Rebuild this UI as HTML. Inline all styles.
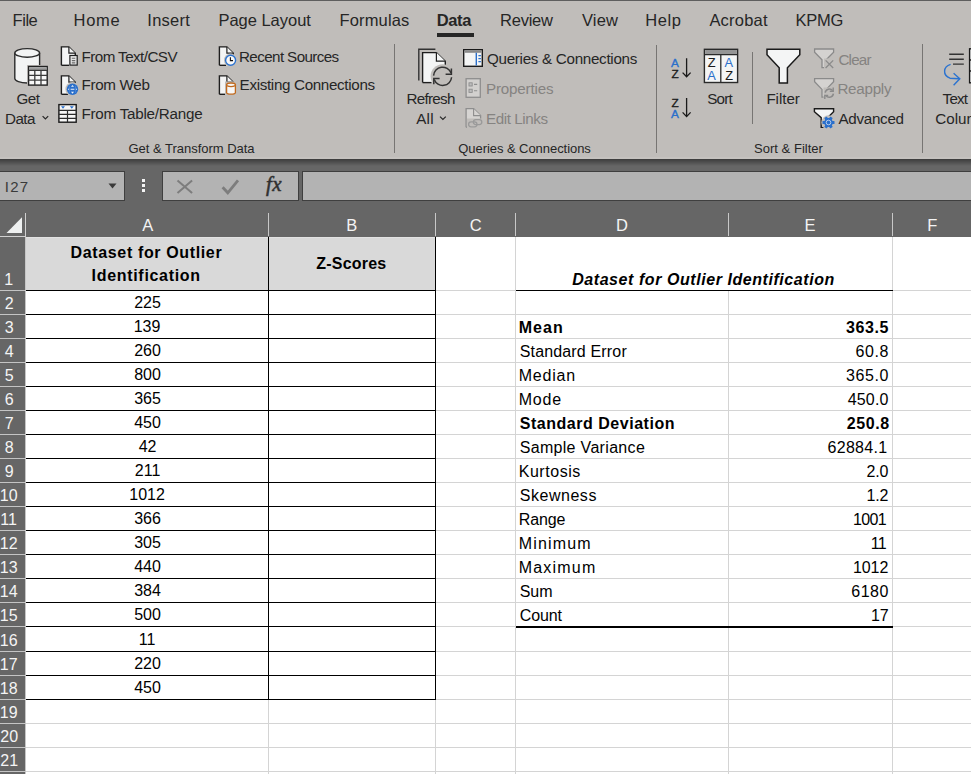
<!DOCTYPE html>
<html><head><meta charset="utf-8"><style>
html,body{margin:0;padding:0}
body{width:971px;height:774px;overflow:hidden;position:relative;background:#666666;font-family:"Liberation Sans",sans-serif}
.t{position:absolute;white-space:nowrap;line-height:1;font-family:"Liberation Sans",sans-serif}
.a{position:absolute}
svg{position:absolute;overflow:visible}
</style></head><body>

<div class="a" style="left:0;top:0;width:971px;height:159px;background:#c0bdba"></div>
<div class="a" style="left:0;top:157px;width:971px;height:2px;background:#c5c2bf"></div>
<div class="a" style="left:0;top:0;width:971px;height:1px;background:#5e5e5e"></div>
<div class="a" style="left:437px;top:33px;width:37px;height:4px;background:#262626"></div>
<div class="a" style="left:394px;top:44px;width:1px;height:109px;background:#777573"></div>
<div class="a" style="left:656px;top:45px;width:1px;height:108px;background:#777573"></div>
<div class="a" style="left:752px;top:52px;width:1px;height:72px;background:#777573"></div>
<div class="a" style="left:922px;top:44px;width:1px;height:109px;background:#777573"></div>
<div class="a" style="left:0;top:159px;width:971px;height:7px;background:linear-gradient(#3c3c3c,#666666)"></div>
<div class="a" style="left:-1px;top:171px;width:124px;height:28px;background:#b3b3b3;border:1px solid #3f3f3f"></div>
<svg style="left:0;top:0" width="971" height="774"><path d="M108.5 183.5h8l-4 5z" fill="#3a3a3a"/></svg>
<div class="a" style="left:142px;top:179px;width:3px;height:3px;background:#f4f4f4"></div>
<div class="a" style="left:142px;top:184px;width:3px;height:3px;background:#f4f4f4"></div>
<div class="a" style="left:142px;top:189px;width:3px;height:3px;background:#f4f4f4"></div>
<div class="a" style="left:162px;top:171px;width:135px;height:28px;background:#b3b3b3;border:1px solid #3f3f3f"></div>
<div class="a" style="left:302px;top:171px;width:680px;height:28px;background:#b3b3b3;border:1px solid #3f3f3f"></div>
<svg style="left:0;top:0" width="971" height="774">
<path d="M177.5 180.5l14.6 12.6M192.1 180.5l-14.6 12.6" stroke="#7d7d7d" stroke-width="2" fill="none"/>
<path d="M222.6 187.2l5.2 5.6l10.2-12.4" stroke="#7d7d7d" stroke-width="2.8" fill="none"/>
</svg>
<span class="t" style="left:266px;top:174px;font-family:'Liberation Serif',serif;font-style:italic;font-size:21px;color:#303030;-webkit-text-stroke:0.5px #303030;letter-spacing:0.5px;">fx</span>
<div class="a" style="left:26px;top:237px;width:945px;height:537px;background:#ffffff"></div>
<div class="a" style="left:268px;top:213px;width:1px;height:23px;background:#c8c8c8"></div>
<div class="a" style="left:435px;top:213px;width:1px;height:23px;background:#c8c8c8"></div>
<div class="a" style="left:515px;top:213px;width:1px;height:23px;background:#c8c8c8"></div>
<div class="a" style="left:728px;top:213px;width:1px;height:23px;background:#c8c8c8"></div>
<div class="a" style="left:892px;top:213px;width:1px;height:23px;background:#c8c8c8"></div>
<div class="a" style="left:25px;top:213px;width:1px;height:24px;background:#d0d0d0"></div>
<div class="a" style="left:0;top:236px;width:26px;height:1px;background:#d0d0d0"></div>
<svg style="left:0;top:0" width="971" height="774"><path d="M6.5 233L22 233L22 217.3Z" fill="#eef0f0"/></svg>
<div class="a" style="left:25px;top:237px;width:1px;height:537px;background:#c6c6c6"></div>
<svg style="left:0;top:0" width="971" height="774" shape-rendering="crispEdges">
<rect x="268" y="237" width="1" height="537" fill="#d4d4d4"/>
<rect x="435" y="237" width="1" height="537" fill="#d4d4d4"/>
<rect x="515" y="237" width="1" height="537" fill="#d4d4d4"/>
<rect x="728" y="237" width="1" height="537" fill="#d4d4d4"/>
<rect x="892" y="237" width="1" height="537" fill="#d4d4d4"/>
<rect x="26" y="290" width="945" height="1" fill="#d4d4d4"/>
<rect x="0" y="290" width="25" height="1" fill="#c4c4c4"/>
<rect x="26" y="314" width="945" height="1" fill="#d4d4d4"/>
<rect x="0" y="314" width="25" height="1" fill="#c4c4c4"/>
<rect x="26" y="338" width="945" height="1" fill="#d4d4d4"/>
<rect x="0" y="338" width="25" height="1" fill="#c4c4c4"/>
<rect x="26" y="362" width="945" height="1" fill="#d4d4d4"/>
<rect x="0" y="362" width="25" height="1" fill="#c4c4c4"/>
<rect x="26" y="386" width="945" height="1" fill="#d4d4d4"/>
<rect x="0" y="386" width="25" height="1" fill="#c4c4c4"/>
<rect x="26" y="410" width="945" height="1" fill="#d4d4d4"/>
<rect x="0" y="410" width="25" height="1" fill="#c4c4c4"/>
<rect x="26" y="434" width="945" height="1" fill="#d4d4d4"/>
<rect x="0" y="434" width="25" height="1" fill="#c4c4c4"/>
<rect x="26" y="458" width="945" height="1" fill="#d4d4d4"/>
<rect x="0" y="458" width="25" height="1" fill="#c4c4c4"/>
<rect x="26" y="482" width="945" height="1" fill="#d4d4d4"/>
<rect x="0" y="482" width="25" height="1" fill="#c4c4c4"/>
<rect x="26" y="506" width="945" height="1" fill="#d4d4d4"/>
<rect x="0" y="506" width="25" height="1" fill="#c4c4c4"/>
<rect x="26" y="530" width="945" height="1" fill="#d4d4d4"/>
<rect x="0" y="530" width="25" height="1" fill="#c4c4c4"/>
<rect x="26" y="554" width="945" height="1" fill="#d4d4d4"/>
<rect x="0" y="554" width="25" height="1" fill="#c4c4c4"/>
<rect x="26" y="578" width="945" height="1" fill="#d4d4d4"/>
<rect x="0" y="578" width="25" height="1" fill="#c4c4c4"/>
<rect x="26" y="602" width="945" height="1" fill="#d4d4d4"/>
<rect x="0" y="602" width="25" height="1" fill="#c4c4c4"/>
<rect x="26" y="626" width="945" height="1" fill="#d4d4d4"/>
<rect x="0" y="626" width="25" height="1" fill="#c4c4c4"/>
<rect x="26" y="651" width="945" height="1" fill="#d4d4d4"/>
<rect x="0" y="651" width="25" height="1" fill="#c4c4c4"/>
<rect x="26" y="675" width="945" height="1" fill="#d4d4d4"/>
<rect x="0" y="675" width="25" height="1" fill="#c4c4c4"/>
<rect x="26" y="699" width="945" height="1" fill="#d4d4d4"/>
<rect x="0" y="699" width="25" height="1" fill="#c4c4c4"/>
<rect x="26" y="723" width="945" height="1" fill="#d4d4d4"/>
<rect x="0" y="723" width="25" height="1" fill="#c4c4c4"/>
<rect x="26" y="747" width="945" height="1" fill="#d4d4d4"/>
<rect x="0" y="747" width="25" height="1" fill="#c4c4c4"/>
<rect x="26" y="771" width="945" height="1" fill="#d4d4d4"/>
<rect x="0" y="771" width="25" height="1" fill="#c4c4c4"/>
<rect x="26" y="795" width="945" height="1" fill="#d4d4d4"/>
<rect x="0" y="795" width="25" height="1" fill="#c4c4c4"/>
</svg>
<div class="a" style="left:26px;top:237px;width:409px;height:53px;background:#d9d9d9"></div>
<div class="a" style="left:26px;top:237px;width:409px;height:1px;background:#e2e2e2"></div>
<div class="a" style="left:516px;top:237px;width:376px;height:53px;background:#ffffff"></div>
<svg style="left:0;top:0" width="971" height="774" shape-rendering="crispEdges">
<rect x="268" y="237" width="1" height="463" fill="#000"/>
<rect x="435" y="237" width="1" height="463" fill="#000"/>
<rect x="26" y="290" width="410" height="1" fill="#000"/>
<rect x="26" y="314" width="410" height="1" fill="#000"/>
<rect x="26" y="338" width="410" height="1" fill="#000"/>
<rect x="26" y="362" width="410" height="1" fill="#000"/>
<rect x="26" y="386" width="410" height="1" fill="#000"/>
<rect x="26" y="410" width="410" height="1" fill="#000"/>
<rect x="26" y="434" width="410" height="1" fill="#000"/>
<rect x="26" y="458" width="410" height="1" fill="#000"/>
<rect x="26" y="482" width="410" height="1" fill="#000"/>
<rect x="26" y="506" width="410" height="1" fill="#000"/>
<rect x="26" y="530" width="410" height="1" fill="#000"/>
<rect x="26" y="554" width="410" height="1" fill="#000"/>
<rect x="26" y="578" width="410" height="1" fill="#000"/>
<rect x="26" y="602" width="410" height="1" fill="#000"/>
<rect x="26" y="626" width="410" height="1" fill="#000"/>
<rect x="26" y="651" width="410" height="1" fill="#000"/>
<rect x="26" y="675" width="410" height="1" fill="#000"/>
<rect x="26" y="699" width="410" height="1" fill="#000"/>
<rect x="516" y="290" width="377" height="1" fill="#000"/>
<rect x="516" y="626" width="377" height="2" fill="#000"/>
</svg>
<svg style="left:0;top:0" width="971" height="774">
<g stroke-linejoin="miter">
<!-- Get Data cylinder -->
<path d="M14.8 52.9 V78.6 A12.4 4.4 0 0 0 39.6 78.6 V52.9" fill="#f3f4f4" stroke="#2b2b2b" stroke-width="1.4"/>
<ellipse cx="27.2" cy="52.9" rx="12.4" ry="4.3" fill="#f3f4f4" stroke="#2b2b2b" stroke-width="1.4"/>
<!-- table -->
<rect x="27" y="65" width="21.6" height="21.6" fill="#c0bdba"/>
<rect x="28.6" y="66.5" width="18.6" height="18.6" fill="#f8f8f8" stroke="#222" stroke-width="1.4"/>
<rect x="29.3" y="67.2" width="17.2" height="3" fill="#9c9c9c"/>
<path d="M28.6 70.4H47.2M28.6 75.3H47.2M28.6 80.2H47.2M34.8 70.4V85.1M41 70.4V85.1" stroke="#3a3a3a" stroke-width="1.3" fill="none"/>
<!-- chevron Get Data -->
<path d="M42.6 116.2L45.4 119L48.2 116.2" stroke="#262626" stroke-width="1.2" fill="none"/>

<!-- doc icon generic: From Text/CSV -->
<g transform="translate(0,0)">
<path d="M61.4 65.3V46.9H68.9L75.3 53.2V65.3Z" fill="#f4f5f5" stroke="none"/>
<path d="M61.4 65.3V46.9H68.9L75.3 53.2V56" fill="none" stroke="#1e1e1e" stroke-width="1.4"/>
<path d="M68.9 46.9V53.2H75.3" fill="#f4f5f5" stroke="#1e1e1e" stroke-width="1.2"/>
<path d="M61.4 65.3H69" stroke="#1e1e1e" stroke-width="1.4"/>
<rect x="69.9" y="55.5" width="7.3" height="9.6" fill="#e8e8e8" stroke="#1e1e1e" stroke-width="1.2"/>
<path d="M71.8 58.3H75.3M71.8 60.6H75.3M71.8 62.9H75.3" stroke="#6a6a6a" stroke-width="1.1"/>
</g>
<!-- From Web doc -->
<g>
<path d="M61.4 94.3V75.9H68.9L75.3 82.2V94.3Z" fill="#f4f5f5" stroke="none"/>
<path d="M61.4 94.3V75.9H68.9L75.3 82.2V84" fill="none" stroke="#1e1e1e" stroke-width="1.4"/>
<path d="M68.9 75.9V82.2H75.3" fill="#f4f5f5" stroke="#1e1e1e" stroke-width="1.2"/>
<path d="M61.4 94.3H68" stroke="#1e1e1e" stroke-width="1.4"/>
<circle cx="72.4" cy="89.1" r="7" fill="#c0bdba"/>
<circle cx="72.5" cy="89.3" r="5.7" fill="#2a6fcb"/>
<path d="M68 89.3H69M70.6 89.3H74.4M76 89.3H77" stroke="#f0f4fa" stroke-width="1.1"/>
<path d="M71 86.8L72.5 84.9L74 86.8Z M71 91.8L72.5 93.7L74 91.8Z" fill="#f0f4fa"/>
<path d="M69.4 85.8V92.8M75.6 85.8V92.8" stroke="#5a90d8" stroke-width="0.7"/>
</g>
<!-- From Table/Range -->
<g>
<rect x="58.9" y="104.6" width="17.3" height="17.6" fill="#f6f6f6" stroke="#1a1a1a" stroke-width="1.4"/>
<path d="M58.9 110.3H76.2M58.9 114.4H76.2M58.9 118.3H76.2M67.5 110.3V122.2" stroke="#2a2a2a" stroke-width="1.2"/>
<path d="M61 106.2H65L63 108.8Z M69.8 106.2H73.8L71.8 108.8Z" fill="#2a6fcb"/>
</g>
<!-- Recent Sources doc + clock -->
<g>
<path d="M219.4 65.3V46.9H226.9L233.3 53.2V65.3Z" fill="#f4f5f5" stroke="none"/>
<path d="M219.4 65.3V46.9H226.9L233.3 53.2V56" fill="none" stroke="#1e1e1e" stroke-width="1.4"/>
<path d="M226.9 46.9V53.2H233.3" fill="#f4f5f5" stroke="#1e1e1e" stroke-width="1.2"/>
<path d="M219.4 65.3H226" stroke="#1e1e1e" stroke-width="1.4"/>
<circle cx="230.6" cy="60.2" r="6.6" fill="#c0bdba"/>
<circle cx="230.6" cy="60.2" r="5" fill="#f8f8f8" stroke="#2b73d0" stroke-width="1.4"/>
<path d="M230.4 57.2V60.6H233" stroke="#111" stroke-width="1.1" fill="none"/>
</g>
<!-- Existing Connections doc + cylinder -->
<g>
<path d="M219.4 94.3V75.9H226.9L233.3 82.2V94.3Z" fill="#f4f5f5" stroke="none"/>
<path d="M219.4 94.3V75.9H226.9L233.3 82.2V84" fill="none" stroke="#1e1e1e" stroke-width="1.4"/>
<path d="M226.9 75.9V82.2H233.3" fill="#f4f5f5" stroke="#1e1e1e" stroke-width="1.2"/>
<path d="M219.4 94.3H226" stroke="#1e1e1e" stroke-width="1.4"/>
<rect x="225" y="81.5" width="12" height="14.5" fill="#c0bdba"/>
<path d="M226.6 84.8V92.4A4.4 1.8 0 0 0 235.4 92.4V84.8" fill="#f6f6f6" stroke="#c0691d" stroke-width="1.3"/>
<ellipse cx="231" cy="84.8" rx="4.4" ry="1.8" fill="#f6f6f6" stroke="#c0691d" stroke-width="1.3"/>
</g>

<!-- Refresh All -->
<g>
<path d="M418.8 80.4V49.2H435.4" stroke="#333" stroke-width="1.4" fill="none"/>
<path d="M422.6 82.6V52.6H436.4L445.3 61.2V82.6Z" fill="#f4f5f5" stroke="none"/>
<path d="M422.6 82.6V52.6H436.4L445.3 61.2V66" fill="none" stroke="#1e1e1e" stroke-width="1.4"/>
<path d="M436.4 52.6V61.2H445.3" fill="#f4f5f5" stroke="#1e1e1e" stroke-width="1.2"/>
<path d="M422.6 82.6H431.5" stroke="#1e1e1e" stroke-width="1.4"/>
<circle cx="442.6" cy="76.2" r="12" fill="#c0bdba"/>
<path d="M433.6 75.6A9 9 0 0 1 451 73" stroke="#333" stroke-width="1.5" fill="none"/>
<path d="M451.4 68.5V74.3H445.6" stroke="#333" stroke-width="1.5" fill="none"/>
<path d="M451.6 77.2A9 9 0 0 1 434.2 79.6" stroke="#333" stroke-width="1.5" fill="none"/>
<path d="M433.8 84.3V78.5H439.6" stroke="#333" stroke-width="1.5" fill="none"/>
</g>
<path d="M440 116.6L442.9 119.4L445.8 116.6" stroke="#262626" stroke-width="1.2" fill="none"/>

<!-- Queries & Connections icon -->
<g>
<rect x="463.7" y="49.7" width="18.6" height="16.6" fill="#f4f5f5" stroke="#1a1a1a" stroke-width="1.4"/>
<rect x="464.4" y="50.4" width="17.2" height="2.4" fill="#8a8a8a"/>
<path d="M476.3 52.8V65.6" stroke="#2b6fcb" stroke-width="1.4"/>
<path d="M478.4 55.6H480.9M478.4 58.6H480.9M478.4 61.6H480.9" stroke="#2b6fcb" stroke-width="1.3"/>
</g>
<!-- Properties (disabled) -->
<g>
<rect x="466.1" y="78.7" width="14.2" height="18.6" fill="#d2d0ce" stroke="#8e8e8e" stroke-width="1.3"/>
<rect x="469" y="82.8" width="3.2" height="3.2" fill="#bcbcbc" stroke="#8e8e8e" stroke-width="0.9"/>
<rect x="469" y="89.2" width="3.2" height="3.2" fill="#bcbcbc" stroke="#8e8e8e" stroke-width="0.9"/>
<path d="M474 84.4H477.2M474 90.8H477.2" stroke="#8e8e8e" stroke-width="1.1"/>
</g>
<!-- Edit Links (disabled) -->
<g>
<path d="M466.1 127.2V108.7H473.6L480.6 115.6V120" fill="#d6d4d2" stroke="#8e8e8e" stroke-width="1.3"/>
<path d="M473.6 108.7V115.6H480.6" fill="#d6d4d2" stroke="#8e8e8e" stroke-width="1.1"/>
<path d="M466.1 127.2H470" stroke="#8e8e8e" stroke-width="1.3"/>
<rect x="467" y="118.5" width="16" height="10" fill="#c0bdba"/>
<rect x="468.6" y="121.8" width="8.4" height="5" rx="2.5" fill="none" stroke="#9a9a9a" stroke-width="1.3"/>
<rect x="473.4" y="119.6" width="8.4" height="5" rx="2.5" fill="none" stroke="#9a9a9a" stroke-width="1.3"/>
</g>

<!-- Sort AZ -->
<g font-family="Liberation Sans" font-size="11.8" stroke-width="0.35">
<text x="671" y="66.8" fill="#2a6fcb" stroke="#2a6fcb">A</text>
<text x="671.4" y="77.8" fill="#1a1a1a" stroke="#1a1a1a">Z</text>
<text x="671.4" y="106.6" fill="#1a1a1a" stroke="#1a1a1a">Z</text>
<text x="671" y="117.7" fill="#2a6fcb" stroke="#2a6fcb">A</text>
</g>
<path d="M686.6 58.3V76.6M682.6 72.6L686.6 76.8L690.6 72.6" stroke="#1a1a1a" stroke-width="1.3" fill="none"/>
<path d="M686.6 98V116.4M682.6 112.4L686.6 116.6L690.6 112.4" stroke="#1a1a1a" stroke-width="1.3" fill="none"/>
<!-- Sort big -->
<g>
<rect x="704.4" y="49.3" width="33.2" height="33.2" fill="#f4f5f5" stroke="#2a2a2a" stroke-width="1.4"/>
<rect x="705.1" y="50" width="31.8" height="4.4" fill="#959595"/>
<path d="M704.4 54.6H737.6M720.8 54.6V82.5" stroke="#2a2a2a" stroke-width="1.3"/>
<g font-family="Liberation Sans" font-size="12.8" stroke-width="0.05">
<text x="707.8" y="66.6" fill="#1a1a1a" stroke="#1a1a1a">Z</text>
<text x="707.2" y="79.6" fill="#2a6fcb" stroke="#2a6fcb">A</text>
<text x="724.6" y="66.6" fill="#2a6fcb" stroke="#2a6fcb">A</text>
<text x="725.2" y="79.6" fill="#1a1a1a" stroke="#1a1a1a">Z</text>
</g>
</g>
<!-- Filter big -->
<path d="M767 49.2H799.8V54.8L787.4 67.8V83H779.2V67.8L767 54.8Z" fill="#f4f5f5" stroke="#1a1a1a" stroke-width="1.5"/>
<!-- Clear (disabled) -->
<g>
<path d="M814.6 49H833.6V52.2L826.2 59.8V67.6H822V59.8L814.6 52.2Z" fill="#d4d2d0" stroke="#8a8a8a" stroke-width="1.3"/>
<rect x="824" y="58.5" width="11" height="11" fill="#c0bdba"/>
<path d="M825.6 60.4L833.2 68M833.2 60.4L825.6 68" stroke="#8a8a8a" stroke-width="1.3"/>
</g>
<!-- Reapply (disabled) -->
<g>
<path d="M814.6 78.6H833.6V81.8L826.2 89.4V97.2H822V89.4L814.6 81.8Z" fill="#d4d2d0" stroke="#8a8a8a" stroke-width="1.3"/>
<rect x="823.5" y="87.5" width="11.5" height="11" fill="#c0bdba"/>
<path d="M825.2 92.6A4.2 4.2 0 0 1 832.6 90.6M833.4 93.6A4.2 4.2 0 0 1 826 95.8" stroke="#8a8a8a" stroke-width="1.5" fill="none"/>
<path d="M833.2 87.6V91.2H829.8M824.8 99V95.4H828.2" stroke="#8a8a8a" stroke-width="1.4" fill="none"/>
</g>
<!-- Advanced -->
<g>
<path d="M814.4 108.7H833.6V111.7L828 117.2V127.4H821.2V117.6L814.4 111.7Z" fill="#f4f5f5" stroke="#1a1a1a" stroke-width="1.4"/>
<circle cx="828.5" cy="122.5" r="7.2" fill="#c0bdba"/>
<g transform="translate(828.5 122.5)" fill="#2a6fcb">
<circle r="4.4"/>
<rect x="-6" y="-1.5" width="12" height="3" rx="0.6"/>
<rect x="-6" y="-1.5" width="12" height="3" rx="0.6" transform="rotate(60)"/>
<rect x="-6" y="-1.5" width="12" height="3" rx="0.6" transform="rotate(120)"/>
<circle r="2.3" fill="none" stroke="#cfe0f5" stroke-width="0.8"/>
</g>
</g>
<!-- Text to Columns (partial) -->
<g>
<path d="M949.2 54.3H963.8M949.2 59.2H963.8M953 64.1H963.8" stroke="#333" stroke-width="1.4"/>
<rect x="969.6" y="48.8" width="10" height="34" fill="#f4f5f5" stroke="#1a1a1a" stroke-width="1.4"/>
<path d="M969.6 60H980M969.6 71H980" stroke="#1a1a1a" stroke-width="1.3"/>
<path d="M950.6 64.4C943 66.6 942.4 75.4 950 78.2L959 78.8" stroke="#2b73d0" stroke-width="1.4" fill="none"/>
<path d="M953.6 73.2L959.8 78.8L953.6 85.2" stroke="#2b73d0" stroke-width="1.4" fill="none"/>
</g>
</g>
</svg>

<span class="t" style="left:12.60px;top:12.00px;font-size:16.5px;color:#262626;letter-spacing:-0.470px;">File</span>
<span class="t" style="left:73.60px;top:12.00px;font-size:16.5px;color:#262626;letter-spacing:0.654px;">Home</span>
<span class="t" style="left:147.30px;top:12.00px;font-size:16.5px;color:#262626;letter-spacing:0.264px;">Insert</span>
<span class="t" style="left:218.40px;top:12.00px;font-size:16.5px;color:#262626;letter-spacing:-0.018px;">Page Layout</span>
<span class="t" style="left:339.50px;top:12.00px;font-size:16.5px;color:#262626;letter-spacing:0.141px;">Formulas</span>
<span class="t" style="left:436.70px;top:12.00px;font-size:16.5px;color:#262626;font-weight:bold;letter-spacing:-0.329px;">Data</span>
<span class="t" style="left:500.10px;top:12.00px;font-size:16.5px;color:#262626;letter-spacing:-0.257px;">Review</span>
<span class="t" style="left:582.00px;top:12.00px;font-size:16.5px;color:#262626;letter-spacing:0.150px;">View</span>
<span class="t" style="left:645.20px;top:12.00px;font-size:16.5px;color:#262626;letter-spacing:0.614px;">Help</span>
<span class="t" style="left:709.40px;top:12.00px;font-size:16.5px;color:#262626;letter-spacing:0.220px;">Acrobat</span>
<span class="t" style="left:795.40px;top:12.00px;font-size:16.5px;color:#262626;letter-spacing:-0.185px;">KPMG</span>
<span class="t" style="left:16.60px;top:91.00px;font-size:15.2px;color:#262626;letter-spacing:-0.600px;">Get</span>
<span class="t" style="left:5.00px;top:111.00px;font-size:15.2px;color:#262626;letter-spacing:-0.545px;">Data</span>
<span class="t" style="left:81.50px;top:49.00px;font-size:15.2px;color:#262626;letter-spacing:-0.552px;">From Text/CSV</span>
<span class="t" style="left:81.50px;top:77.00px;font-size:15.2px;color:#262626;letter-spacing:-0.308px;">From Web</span>
<span class="t" style="left:81.50px;top:106.00px;font-size:15.2px;color:#262626;letter-spacing:-0.239px;">From Table/Range</span>
<span class="t" style="left:239.00px;top:49.00px;font-size:15.2px;color:#262626;letter-spacing:-0.605px;">Recent Sources</span>
<span class="t" style="left:239.60px;top:77.00px;font-size:15.2px;color:#262626;letter-spacing:-0.333px;">Existing Connections</span>
<span class="t" style="left:406.40px;top:91.00px;font-size:15.2px;color:#262626;letter-spacing:-0.689px;">Refresh</span>
<span class="t" style="left:416.20px;top:111.00px;font-size:15.2px;color:#262626;letter-spacing:0.248px;">All</span>
<span class="t" style="left:487.00px;top:51.00px;font-size:15.2px;color:#262626;letter-spacing:-0.294px;">Queries &amp; Connections</span>
<span class="t" style="left:486.00px;top:81.00px;font-size:15.2px;color:#858381;letter-spacing:-0.192px;">Properties</span>
<span class="t" style="left:486.00px;top:111.00px;font-size:15.2px;color:#858381;letter-spacing:-0.417px;">Edit Links</span>
<span class="t" style="left:707.20px;top:91.00px;font-size:15.2px;color:#262626;letter-spacing:-0.745px;">Sort</span>
<span class="t" style="left:766.40px;top:91.00px;font-size:15.2px;color:#262626;letter-spacing:-0.058px;">Filter</span>
<span class="t" style="left:838.40px;top:52.00px;font-size:15.2px;color:#858381;letter-spacing:-0.784px;">Clear</span>
<span class="t" style="left:837.40px;top:81.00px;font-size:15.2px;color:#858381;letter-spacing:-0.255px;">Reapply</span>
<span class="t" style="left:838.40px;top:111.00px;font-size:15.2px;color:#262626;letter-spacing:-0.272px;">Advanced</span>
<span class="t" style="left:942.60px;top:91.00px;font-size:15.2px;color:#262626;letter-spacing:-0.800px;">Text</span>
<span class="t" style="left:935.30px;top:111.00px;font-size:15.2px;color:#262626;">Columns</span>
<span class="t" style="left:128.50px;top:142.00px;font-size:13px;color:#262626;letter-spacing:-0.018px;">Get &amp; Transform Data</span>
<span class="t" style="left:458.30px;top:142.00px;font-size:13px;color:#262626;letter-spacing:-0.059px;">Queries &amp; Connections</span>
<span class="t" style="left:754.00px;top:142.00px;font-size:13px;color:#262626;letter-spacing:0.025px;">Sort &amp; Filter</span>
<span class="t" style="left:4.80px;top:179.00px;font-size:15px;color:#3a3a3a;letter-spacing:1.200px;">I27</span>
<span class="t" style="left:142.20px;top:217.00px;font-size:16.5px;color:#f4f4f4;">A</span>
<span class="t" style="left:346.30px;top:217.00px;font-size:16.5px;color:#f4f4f4;">B</span>
<span class="t" style="left:469.70px;top:217.00px;font-size:16.5px;color:#f4f4f4;">C</span>
<span class="t" style="left:615.90px;top:217.00px;font-size:16.5px;color:#f4f4f4;">D</span>
<span class="t" style="left:804.50px;top:217.00px;font-size:16.5px;color:#f4f4f4;">E</span>
<span class="t" style="left:927.30px;top:217.00px;font-size:16.5px;color:#f4f4f4;">F</span>
<span class="t" style="left:70.60px;top:245.00px;font-size:16px;color:#000;font-weight:bold;letter-spacing:0.636px;">Dataset for Outlier</span>
<span class="t" style="left:91.60px;top:268.00px;font-size:16px;color:#000;font-weight:bold;letter-spacing:0.686px;">Identification</span>
<span class="t" style="left:316.30px;top:256.00px;font-size:16px;color:#000;font-weight:bold;letter-spacing:0.204px;">Z-Scores</span>
<span class="t" style="left:572.20px;top:272.00px;font-size:16px;color:#000;font-weight:bold;font-style:italic;letter-spacing:0.560px;">Dataset for Outlier Identification</span>
<span class="t" style="left:134.20px;top:295.00px;font-size:16px;color:#000;">225</span>
<span class="t" style="left:133.70px;top:319.00px;font-size:16px;color:#000;">139</span>
<span class="t" style="left:134.20px;top:343.00px;font-size:16px;color:#000;">260</span>
<span class="t" style="left:134.20px;top:367.00px;font-size:16px;color:#000;">800</span>
<span class="t" style="left:134.20px;top:391.00px;font-size:16px;color:#000;">365</span>
<span class="t" style="left:134.20px;top:415.00px;font-size:16px;color:#000;">450</span>
<span class="t" style="left:138.65px;top:439.00px;font-size:16px;color:#000;">42</span>
<span class="t" style="left:134.80px;top:463.00px;font-size:16px;color:#000;">211</span>
<span class="t" style="left:129.25px;top:487.00px;font-size:16px;color:#000;">1012</span>
<span class="t" style="left:134.20px;top:511.00px;font-size:16px;color:#000;">366</span>
<span class="t" style="left:134.20px;top:535.00px;font-size:16px;color:#000;">305</span>
<span class="t" style="left:134.20px;top:559.00px;font-size:16px;color:#000;">440</span>
<span class="t" style="left:134.20px;top:583.00px;font-size:16px;color:#000;">384</span>
<span class="t" style="left:134.20px;top:607.00px;font-size:16px;color:#000;">500</span>
<span class="t" style="left:138.74px;top:632.00px;font-size:16px;color:#000;">11</span>
<span class="t" style="left:134.20px;top:656.00px;font-size:16px;color:#000;">220</span>
<span class="t" style="left:134.20px;top:680.00px;font-size:16px;color:#000;">450</span>
<span class="t" style="left:518.70px;top:320.00px;font-size:16px;color:#000;font-weight:bold;letter-spacing:1.092px;">Mean</span>
<span class="t" style="left:845.90px;top:320.00px;font-size:16px;color:#000;font-weight:bold;letter-spacing:0.615px;">363.5</span>
<span class="t" style="left:519.70px;top:344.00px;font-size:16px;color:#000;letter-spacing:0.161px;">Standard Error</span>
<span class="t" style="left:855.60px;top:344.00px;font-size:16px;color:#000;letter-spacing:0.553px;">60.8</span>
<span class="t" style="left:518.70px;top:368.00px;font-size:16px;color:#000;letter-spacing:0.784px;">Median</span>
<span class="t" style="left:845.90px;top:368.00px;font-size:16px;color:#000;letter-spacing:0.615px;">365.0</span>
<span class="t" style="left:518.70px;top:392.00px;font-size:16px;color:#000;letter-spacing:0.792px;">Mode</span>
<span class="t" style="left:847.80px;top:392.00px;font-size:16px;color:#000;letter-spacing:0.140px;">450.0</span>
<span class="t" style="left:519.70px;top:416.00px;font-size:16px;color:#000;font-weight:bold;letter-spacing:0.528px;">Standard Deviation</span>
<span class="t" style="left:846.80px;top:416.00px;font-size:16px;color:#000;font-weight:bold;letter-spacing:0.565px;">250.8</span>
<span class="t" style="left:519.70px;top:440.00px;font-size:16px;color:#000;letter-spacing:0.317px;">Sample Variance</span>
<span class="t" style="left:827.50px;top:440.00px;font-size:16px;color:#000;letter-spacing:0.294px;">62884.1</span>
<span class="t" style="left:518.70px;top:464.00px;font-size:16px;color:#000;letter-spacing:0.543px;">Kurtosis</span>
<span class="t" style="left:866.60px;top:464.00px;font-size:16px;color:#000;letter-spacing:-0.272px;">2.0</span>
<span class="t" style="left:519.70px;top:488.00px;font-size:16px;color:#000;letter-spacing:0.540px;">Skewness</span>
<span class="t" style="left:866.50px;top:488.00px;font-size:16px;color:#000;letter-spacing:-0.222px;">1.2</span>
<span class="t" style="left:518.70px;top:512.00px;font-size:16px;color:#000;letter-spacing:-0.088px;">Range</span>
<span class="t" style="left:852.90px;top:512.00px;font-size:16px;color:#000;letter-spacing:-0.598px;">1001</span>
<span class="t" style="left:518.70px;top:536.00px;font-size:16px;color:#000;letter-spacing:1.156px;">Minimum</span>
<span class="t" style="left:870.69px;top:536.00px;font-size:16px;color:#000;letter-spacing:-0.600px;">11</span>
<span class="t" style="left:518.70px;top:560.00px;font-size:16px;color:#000;letter-spacing:1.200px;">Maximum</span>
<span class="t" style="left:852.90px;top:560.00px;font-size:16px;color:#000;letter-spacing:-0.065px;">1012</span>
<span class="t" style="left:519.70px;top:584.00px;font-size:16px;color:#000;letter-spacing:-0.035px;">Sum</span>
<span class="t" style="left:851.30px;top:584.00px;font-size:16px;color:#000;letter-spacing:0.468px;">6180</span>
<span class="t" style="left:519.70px;top:608.00px;font-size:16px;color:#000;letter-spacing:-0.113px;">Count</span>
<span class="t" style="left:871.00px;top:608.00px;font-size:16px;color:#000;letter-spacing:-0.198px;">17</span>
<span class="t" style="left:4.20px;top:272.00px;font-size:16px;color:#f4f4f4;">1</span>
<span class="t" style="left:4.70px;top:296.00px;font-size:16px;color:#f4f4f4;">2</span>
<span class="t" style="left:4.70px;top:320.00px;font-size:16px;color:#f4f4f4;">3</span>
<span class="t" style="left:4.70px;top:344.00px;font-size:16px;color:#f4f4f4;">4</span>
<span class="t" style="left:4.70px;top:368.00px;font-size:16px;color:#f4f4f4;">5</span>
<span class="t" style="left:4.70px;top:392.00px;font-size:16px;color:#f4f4f4;">6</span>
<span class="t" style="left:4.70px;top:416.00px;font-size:16px;color:#f4f4f4;">7</span>
<span class="t" style="left:4.70px;top:440.00px;font-size:16px;color:#f4f4f4;">8</span>
<span class="t" style="left:4.70px;top:464.00px;font-size:16px;color:#f4f4f4;">9</span>
<span class="t" style="left:-0.25px;top:488.00px;font-size:16px;color:#f4f4f4;">10</span>
<span class="t" style="left:0.34px;top:512.00px;font-size:16px;color:#f4f4f4;">11</span>
<span class="t" style="left:-0.25px;top:536.00px;font-size:16px;color:#f4f4f4;">12</span>
<span class="t" style="left:-0.25px;top:560.00px;font-size:16px;color:#f4f4f4;">13</span>
<span class="t" style="left:-0.25px;top:584.00px;font-size:16px;color:#f4f4f4;">14</span>
<span class="t" style="left:-0.25px;top:608.00px;font-size:16px;color:#f4f4f4;">15</span>
<span class="t" style="left:-0.25px;top:633.00px;font-size:16px;color:#f4f4f4;">16</span>
<span class="t" style="left:-0.25px;top:657.00px;font-size:16px;color:#f4f4f4;">17</span>
<span class="t" style="left:-0.25px;top:681.00px;font-size:16px;color:#f4f4f4;">18</span>
<span class="t" style="left:-0.25px;top:705.00px;font-size:16px;color:#f4f4f4;">19</span>
<span class="t" style="left:0.25px;top:729.00px;font-size:16px;color:#f4f4f4;">20</span>
<span class="t" style="left:0.25px;top:753.00px;font-size:16px;color:#f4f4f4;">21</span>
</body></html>
